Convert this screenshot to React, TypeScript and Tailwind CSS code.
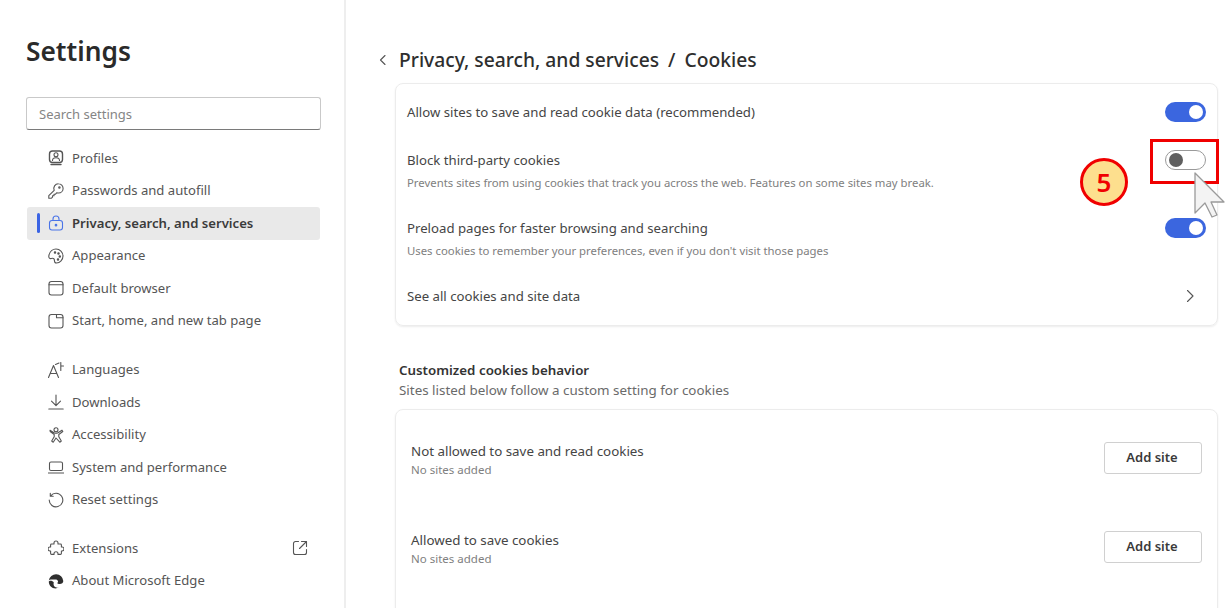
import type { ReactNode } from "react";

const stroke = {
  fill: "none",
  stroke: "currentColor",
  strokeWidth: 1.1,
  strokeLinecap: "round" as const,
  strokeLinejoin: "round" as const,
};

const Icon = ({ children }: { children: ReactNode }) => (
  <svg viewBox="0 0 16 16" className="w-[16px] h-[16px] shrink-0" {...stroke}>
    {children}
  </svg>
);

const icons: Record<string, ReactNode> = {
  profiles: (
    <>
      <rect x="1.500" y="1" width="13" height="11.500" rx="3" strokeWidth="1.400" />
      <circle cx="8" cy="4.800" r="2" />
      <path d="M4.500 10.500c0-1.800 1.500-2.800 3.500-2.800s3.500 1 3.500 2.800" />
      <path d="M3 14.500h10" strokeWidth="1.400" />
    </>
  ),
  key: (
    <>
      <path d="M10.500 .8a4.600 4.600 0 0 1 0 9.200c-.6 0-1.100-.1-1.600-.3L7.500 11.200H6v1.500H4.500v1.500l-1 1H.8v-2.500l5.400-5.400A4.600 4.600 0 0 1 10.500 .8z" />
      <circle cx="11.400" cy="4.500" r=".7" />
    </>
  ),
  lock: (
    <>
      <rect x="1.500" y="5.500" width="13" height="9.500" rx="2.500" />
      <path d="M5 5.500V4a3 3 0 0 1 6 0v1.500" />
      <circle cx="8" cy="10.200" r=".8" fill="currentColor" />
    </>
  ),
  palette: (
    <>
      <path d="M8 1c3.900 0 7 3.100 7 7s-3 7-6.500 7c-1.500 0-2-1-2-2 0-1.500-.6-2.700-2-2.700-1.200 0-1.600.6-2.600.2C.8 10 .6 8.500 1 7c.8-3.500 3.800-6 7-6z" />
      <circle cx="7" cy="4.500" r=".7" fill="currentColor" />
      <circle cx="10.500" cy="5.500" r=".7" fill="currentColor" />
      <circle cx="11.800" cy="8.500" r=".7" fill="currentColor" />
      <circle cx="10" cy="11.500" r=".7" fill="currentColor" />
    </>
  ),
  browser: (
    <>
      <rect x="1" y="1.500" width="14" height="13.500" rx="2.500" />
      <path d="M1 4.800h14" />
    </>
  ),
  home: (
    <>
      <rect x="1" y="1.500" width="14" height="13.500" rx="2.500" />
      <path d="M8.500 1.500v3.300H15" />
    </>
  ),
  lang: (
    <>
      <path d="M.5 15.500 5.500 3.500l5 12M2.300 11.500h6.400" />
      <path d="M7.500 2.500l3.500-1.500M12.800 .5v8M12.800 4H15.500" />
    </>
  ),
  download: <path d="M8 1v10.500M3.500 7.200 8 11.700l4.500-4.500M.8 15h14.400" />,
  access: (
    <>
      <circle cx="8" cy="2.800" r="2" />
      <path d="M2 3.200 6 5.800c1.300.6 2.700.6 4 0l4-2.600 .8 1.300-4 3v2.300l2.500 4.200-1.500 1.200L8 11l-2.800 4.200-1.500-1.200 2.500-4.200V7.500l-4-3z" />
    </>
  ),
  laptop: (
    <>
      <rect x="1.500" y="3" width="13" height="8.500" rx="1.500" />
      <path d="M0 14h16" />
    </>
  ),
  reset: <path d="M2.700 3.800A6.800 6.800 0 1 1 1.200 8M2.300 1.300v2.900h2.900" />,
  ext: (
    <path d="M6 3a2 2 0 0 1 4 0v1h2.500c.5 0 .9.400.9.900V7h.6a2 2 0 0 1 0 4h-.6v2.500c0 .5-.4.900-.9.900H10v-.6a2 2 0 0 0-4 0v.6H3.500c-.5 0-.9-.4-.9-.9V11H2a2 2 0 0 1 0-4h.6V4.900c0-.5.4-.9.900-.9H6z" />
  ),
  edge: (
    <>
      <path
        d="M.8 7.500A7.300 7.300 0 0 1 15.300 8c0 2-1.600 3-3.500 3-1.300 0-2.500-.5-2.500-1.100 1.300-.7 1-3.400-1.900-3.400C4.200 6.500 1.500 6 .8 7.500z"
        fill="#2f2f2f"
        stroke="none"
      />
      <path
        d="M.8 8.500c0 4 3 6.900 6.700 6.900 1.200 0 2.300-.3 3.100-.8-3.300.7-5.800-1.900-4.800-5.100C5 7.500 1.300 7 .8 8.500z"
        fill="#2f2f2f"
        stroke="none"
      />
    </>
  ),
};

const NavItem = ({
  icon,
  label,
  active,
  trailing,
}: {
  icon: string;
  label: string;
  active?: boolean;
  trailing?: ReactNode;
}) => (
  <div
    className={
      active
        ? "relative h-[32.500px] flex items-center gap-[8px] pl-[21px] pr-[12px] rounded-[3px] bg-[#e9e9e9] text-[#3b3b3b] font-semibold"
        : "h-[32.500px] flex items-center gap-[8px] pl-[21px] pr-[12px] text-[#555555]"
    }
  >
    {active && (
      <span className="absolute left-[10px] top-[6px] w-[3px] h-[20px] rounded-full bg-[#3b64e4]" />
    )}
    <span className={active ? "text-[#4a74e8]" : "text-[#555555]"}>
      <Icon>{icons[icon]}</Icon>
    </span>
    <span className={active ? "flex-1 text-[13.150px] leading-none" : "flex-1 text-[13.100px] leading-none"}>
      {label}
    </span>
    {trailing}
  </div>
);

const Toggle = ({ on }: { on?: boolean }) =>
  on ? (
    <div className="w-[41px] h-[20px] rounded-full bg-[#3b66df] flex items-center justify-end pr-[3px]">
      <span className="w-[14px] h-[14px] rounded-full bg-white" />
    </div>
  ) : (
    <div className="w-[41px] h-[20px] rounded-full border border-[#9a9a9a] bg-white flex items-center pl-[3px]">
      <span className="w-[14px] h-[14px] rounded-full bg-[#5f5f5f]" />
    </div>
  );

const CookieRow = ({
  title,
  desc,
  on,
  overlay,
}: {
  title: string;
  desc?: string;
  on?: boolean;
  overlay?: ReactNode;
}) => (
  <div className="relative flex items-start justify-between pl-[11px] pr-[11px]">
    <div className="pt-[1px]">
      <div className="text-[13.200px] leading-[18px] text-[#454545]">{title}</div>
      {desc && (
        <div className="mt-[7px] text-[11.350px] leading-[14px] text-[#808080]">{desc}</div>
      )}
    </div>
    <Toggle on={on} />
    {overlay}
  </div>
);

const SiteRow = ({ title }: { title: string }) => (
  <div className="h-[89px] flex items-start justify-between pl-[15px] pr-[15px] pt-[32px]">
    <div>
      <div className="text-[13.350px] leading-[18px] text-[#454545]">{title}</div>
      <div className="mt-[2.500px] text-[11.500px] leading-[14px] text-[#808080]">No sites added</div>
    </div>
    <button className="w-[98px] h-[32px] pr-[2px] border border-[#d0d0d0] rounded-[3px] bg-white text-[13px] font-semibold text-[#3a3a3a]">
      Add site
    </button>
  </div>
);

export default function App() {
  return (
    <div className="w-[1227px] h-[608px] overflow-hidden bg-white flex font-['Noto_Sans','Open_Sans',sans-serif]">
      <aside className="w-[346px] shrink-0 h-full border-r-2 border-[#eeeeee] pl-[27px] pr-[24px] pt-[33px]">
        <h1 className="ml-[-1px] text-[26.300px] leading-[36px] font-semibold text-[#2a2a2a]">Settings</h1>
        <div className="mt-[28px] mx-[-1px] h-[33px] border border-[#c9c9c9] border-b-[#7a7a7a] rounded-[3px] flex items-center pl-[12px] pt-[2px] text-[13px] text-[#858585]">
          Search settings
        </div>
        <nav className="mt-[12px]">
          <NavItem icon="profiles" label="Profiles" />
          <NavItem icon="key" label="Passwords and autofill" />
          <NavItem icon="lock" label="Privacy, search, and services" active />
          <NavItem icon="palette" label="Appearance" />
          <NavItem icon="browser" label="Default browser" />
          <NavItem icon="home" label="Start, home, and new tab page" />
        </nav>
        <nav className="mt-[16.500px]">
          <NavItem icon="lang" label="Languages" />
          <NavItem icon="download" label="Downloads" />
          <NavItem icon="access" label="Accessibility" />
          <NavItem icon="laptop" label="System and performance" />
          <NavItem icon="reset" label="Reset settings" />
        </nav>
        <nav className="mt-[16px]">
          <NavItem
            icon="ext"
            label="Extensions"
            trailing={
              <svg viewBox="0 0 16 16" className="w-[16px] h-[16px] text-[#555555]" {...stroke}>
                <path d="M6.500 1.500H3.500a2 2 0 0 0-2 2v9a2 2 0 0 0 2 2h9a2 2 0 0 0 2-2v-3" />
                <path d="M9.500 1.500h5v5M14.500 1.500 7.500 8.500" />
              </svg>
            }
          />
          <NavItem icon="edge" label="About Microsoft Edge" />
        </nav>
      </aside>

      <main className="flex-1 pl-[49px] pr-[9px] pt-[47px]">
        <div className="flex items-center h-[26px]">
          <svg viewBox="0 0 10 12" className="w-[10px] h-[12px] ml-[-17px] mr-[11px] text-[#555555]" {...stroke}>
            <path d="M7 1.500 2.500 6 7 10.500" />
          </svg>
          <span className="text-[19.250px] font-medium text-[#2e2e2e] whitespace-nowrap">
            Privacy, search, and services
            <span className="mx-[9px]">/</span>
            Cookies
          </span>
        </div>

        <section className="mt-[10px] h-[243px] border border-[#ececec] rounded-[8px] shadow-[0_1px_2px_rgba(0,0,0,0.08)] pt-[18px]">
          <div className="flex flex-col">
            <CookieRow title="Allow sites to save and read cookie data (recommended)" on />
            <div className="mt-[28px]">
              <CookieRow
                title="Block third-party cookies"
                desc="Prevents sites from using cookies that track you across the web. Features on some sites may break."
                overlay={
                  <>
                    <span className="absolute right-[-2px] top-[-11px] w-[69px] h-[45px] border-[3px] border-[#f00000]" />
                    <span className="absolute right-[89px] top-[8px] w-[48px] h-[48px] rounded-full border-[3px] border-[#f00000] bg-[#fddf8e] flex items-center justify-center text-[26px] font-semibold text-[#f00000]">
                      5
                    </span>
                    <svg viewBox="0 0 32 48" className="absolute right-[-8px] top-[21px] w-[32px] h-[48px]">
                      <path
                        d="M2 2V42L12 32 19 46 24 44 18 31H31Z"
                        fill="#f3f3f3"
                        stroke="#9a9a9a"
                        strokeWidth="1.300"
                        strokeLinejoin="round"
                      />
                    </svg>
                  </>
                }
              />
            </div>
            <div className="mt-[28px]">
              <CookieRow
                title="Preload pages for faster browsing and searching"
                desc="Uses cookies to remember your preferences, even if you don't visit those pages"
                on
              />
            </div>
            <div className="mt-[29px] flex items-center justify-between pl-[11px] pr-[22px]">
              <span className="text-[13.200px] leading-[18px] text-[#454545]">See all cookies and site data</span>
              <svg viewBox="0 0 10 14" className="w-[10px] h-[14px] text-[#555555]" {...stroke}>
                <path d="M2.500 1.500 8 7l-5.500 5.500" />
              </svg>
            </div>
          </div>
        </section>

        <h2 className="mt-[35px] ml-[4px] text-[13.350px] leading-[18px] font-semibold text-[#333333]">
          Customized cookies behavior
        </h2>
        <p className="mt-[2px] ml-[4px] text-[13.400px] leading-[18px] text-[#6a6a6a]">
          Sites listed below follow a custom setting for cookies
        </p>

        <section className="mt-[10px] h-[260px] border border-[#ececec] rounded-[8px] shadow-[0_1px_2px_rgba(0,0,0,0.08)]">
          <SiteRow title="Not allowed to save and read cookies" />
          <SiteRow title="Allowed to save cookies" />
        </section>
      </main>
    </div>
  );
}
